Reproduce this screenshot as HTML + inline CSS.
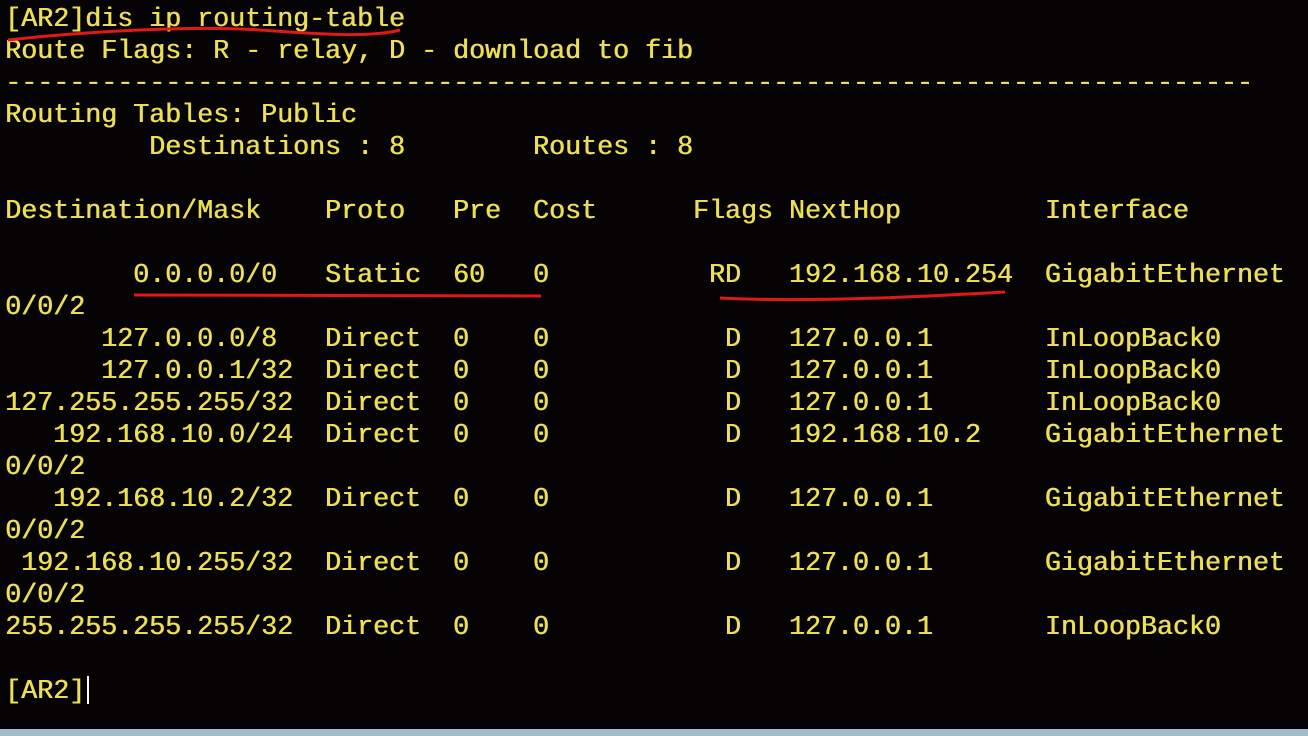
<!DOCTYPE html>
<html><head><meta charset="utf-8"><style>
html,body{margin:0;padding:0;background:#050303;width:1308px;height:736px;overflow:hidden}
pre{position:absolute;left:5px;top:4px;margin:0;font-family:"Liberation Mono",monospace;font-size:26.67px;line-height:32px;color:#ecdf55;letter-spacing:0;text-shadow:0.6px 0 0 #ecdf55}
.bar{position:absolute;left:0;top:729px;width:1308px;height:7px;background:#a3bccb}
.cur{display:inline-block;width:2px;height:28px;background:#fff;vertical-align:-6px;margin-left:2px}
svg{position:absolute;left:0;top:0}
</style></head><body>
<pre>[AR2]dis ip routing-table
Route Flags: R - relay, D - download to fib
------------------------------------------------------------------------------
Routing Tables: Public
         Destinations : 8        Routes : 8

Destination/Mask    Proto   Pre  Cost      Flags NextHop         Interface

        0.0.0.0/0   Static  60   0          RD   192.168.10.254  GigabitEthernet
0/0/2
      127.0.0.0/8   Direct  0    0           D   127.0.0.1       InLoopBack0
      127.0.0.1/32  Direct  0    0           D   127.0.0.1       InLoopBack0
127.255.255.255/32  Direct  0    0           D   127.0.0.1       InLoopBack0
   192.168.10.0/24  Direct  0    0           D   192.168.10.2    GigabitEthernet
0/0/2
   192.168.10.2/32  Direct  0    0           D   127.0.0.1       GigabitEthernet
0/0/2
 192.168.10.255/32  Direct  0    0           D   127.0.0.1       GigabitEthernet
0/0/2
255.255.255.255/32  Direct  0    0           D   127.0.0.1       InLoopBack0

[AR2]<span class="cur"></span></pre>
<svg width="1308" height="736">
<path d="M8 40 C100 30 200 26 260 30 S370 38 400 30" stroke="#e01818" stroke-width="3" fill="none"/>
<path d="M134 295 L541 296" stroke="#e01818" stroke-width="3" fill="none"/>
<path d="M720 298 C800 302 900 298 1005 292" stroke="#e01818" stroke-width="3" fill="none"/>
</svg>
<div class="bar"></div>
</body></html>
